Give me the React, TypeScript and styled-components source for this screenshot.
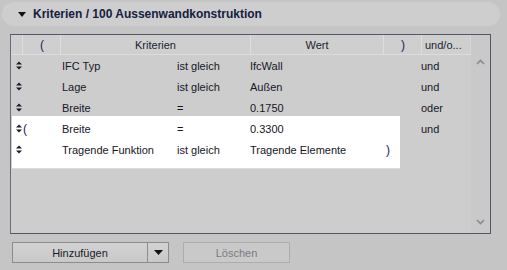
import React from "react";
import styled, { createGlobalStyle } from "styled-components";

const Global = createGlobalStyle`
  html, body { margin: 0; padding: 0; background: #c5c5c5; }
  body { font-family: "Liberation Sans", Arial, sans-serif; }
`;

const Page = styled.div`
  width: 507px;
  height: 270px;
  background: #c5c5c5;
  padding: 2px 7px 0 2px;
  box-sizing: border-box;
  display: flex;
  flex-direction: column;
`;

const TitleBar = styled.div`
  height: 24px;
  border-radius: 12px;
  background: #cecece;
  display: flex;
  align-items: center;
  padding-left: 16px;
  gap: 7px;
  font-weight: bold;
  font-size: 12px;
  color: #142040;
`;

const Body = styled.div`
  padding: 8px 0 0 8px;
  display: flex;
  flex-direction: column;
`;

const Table = styled.div`
  width: 481px;
  height: 200px;
  box-sizing: border-box;
  border: 1px solid #555566;
  border-left-color: #6a6a78;
  display: flex;
  background: #cdcdcd;
`;

const Main = styled.div`
  flex: 1;
  display: flex;
  flex-direction: column;
`;

const HeadRow = styled.div`
  display: flex;
  height: 19px;
  border-bottom: 1px solid #dcdcdc;
  background: #cfcfcf;
`;

const HeadCell = styled.div<{ w: number; align?: string }>`
  width: ${(p) => p.w}px;
  box-sizing: border-box;
  border-right: 1px solid #dedede;
  display: flex;
  align-items: center;
  justify-content: ${(p) => p.align || "center"};
  padding-left: ${(p) => (p.align ? "3px" : "0")};
  font-size: 11px;
  color: #1a1e30;
  white-space: nowrap;
  &:last-child { border-right: 1px solid #d6d6d6; }
`;

const Rows = styled.div`
  display: flex;
  flex-direction: column;
`;

const Row = styled.div`
  display: flex;
  height: 21px;
  align-items: center;
  font-size: 11px;
  color: #161626;
  white-space: nowrap;
`;

const Cell = styled.div<{ w: number }>`
  width: ${(p) => p.w}px;
  flex: none;
  display: flex;
  align-items: center;
`;

const IconCell = styled(Cell)`
  padding-left: 5px;
`;

const Group = styled.div`
  width: 388px;
  margin: -2px 0 0 1px;
  padding: 2px 0 8px 0;
  background: #ffffff;
  box-shadow: 0 1px 0 #dcdcdc;
  & > div { margin-left: -1px; }
`;

const Paren = styled.span`
  color: #14205a;
  font-size: 12px;
  margin-left: 1px;
`;

const Scrollbar = styled.div`
  width: 19px;
  background: #c9c9c9;
  display: flex;
  flex-direction: column;
  align-items: center;
  justify-content: space-between;
  padding: 24px 0 8px;
  box-sizing: border-box;
`;

const Buttons = styled.div`
  display: flex;
  gap: 14px;
  margin-top: 8px;
  margin-left: 2px;
`;

const SplitButton = styled.div`
  width: 157px;
  height: 21px;
  box-sizing: border-box;
  border: 1px solid #8c8c8c;
  background: linear-gradient(#d2d2d2, #c9c9c9);
  display: flex;
  font-size: 11px;
  color: #1a1a2a;
`;

const MainPart = styled.div`
  flex: 1;
  display: flex;
  align-items: center;
  justify-content: center;
  border-right: 1px solid #8c8c8c;
`;

const ArrowPart = styled.div`
  width: 20px;
  display: flex;
  align-items: center;
  justify-content: center;
`;

const Button = styled.div<{ disabled?: boolean }>`
  width: 107px;
  height: 21px;
  box-sizing: border-box;
  border: 1px solid ${(p) => (p.disabled ? "#adadad" : "#8c8c8c")};
  background: #c9c9c9;
  display: flex;
  align-items: center;
  justify-content: center;
  font-size: 11px;
  color: ${(p) => (p.disabled ? "#7a7a86" : "#1a1a2a")};
`;

const SortIcon = () => (
  <svg width="6" height="9" viewBox="0 0 6 9">
    <path d="M0 3.5 L3 0.5 L6 3.5 Z M0 5.5 L3 8.5 L6 5.5 Z" fill="#1a1a2a" />
  </svg>
);

const DownTri = ({ w, h }: { w: number; h: number }) => (
  <svg width={w} height={h} viewBox={`0 0 ${w} ${h}`}>
    <path d={`M0 0 L${w} 0 L${w / 2} ${h} Z`} fill="#111" />
  </svg>
);

const Chevron = ({ up }: { up?: boolean }) => (
  <svg width="9" height="6" viewBox="0 0 9 6">
    <path
      d={up ? "M1 5 L4.5 1.5 L8 5" : "M1 1 L4.5 4.5 L8 1"}
      fill="none"
      stroke="#8a8a8a"
      strokeWidth="1.6"
    />
  </svg>
);

const cols = [12, 38, 190, 133, 38, 49];

type R = { open?: string; krit: string; op: string; wert: string; close?: string; link: string };

const rowsTop: R[] = [
  { krit: "IFC Typ", op: "ist gleich", wert: "IfcWall", link: "und" },
  { krit: "Lage", op: "ist gleich", wert: "Außen", link: "und" },
  { krit: "Breite", op: "=", wert: "0.1750", link: "oder" },
];
const rowsGroup: R[] = [
  { open: "(", krit: "Breite", op: "=", wert: "0.3300", link: "und" },
  { krit: "Tragende Funktion", op: "ist gleich", wert: "Tragende Elemente", close: ")", link: "" },
];

const DataRow = ({ r }: { r: R }) => (
  <Row>
    <IconCell w={6}>
      <SortIcon />
    </IconCell>
    <Cell w={40}>{r.open ? <Paren>{r.open}</Paren> : null}</Cell>
    <Cell w={115}>{r.krit}</Cell>
    <Cell w={73}>{r.op}</Cell>
    <Cell w={135}>{r.wert}</Cell>
    <Cell w={36}>{r.close ? <Paren>{r.close}</Paren> : null}</Cell>
    <Cell w={49}>{r.link}</Cell>
  </Row>
);

export default function App() {
  return (
    <Page>
      <Global />
      <TitleBar>
        <DownTri w={8} h={5} />
        <span>Kriterien / 100 Aussenwandkonstruktion</span>
      </TitleBar>
      <Body>
        <Table>
          <Main>
            <HeadRow>
              <HeadCell w={cols[0]} />
              <HeadCell w={cols[1]}>
                <Paren>(</Paren>
              </HeadCell>
              <HeadCell w={cols[2]}>Kriterien</HeadCell>
              <HeadCell w={cols[3]}>Wert</HeadCell>
              <HeadCell w={cols[4]}>
                <Paren>)</Paren>
              </HeadCell>
              <HeadCell w={cols[5]} align="flex-start">
                und/o...
              </HeadCell>
            </HeadRow>
            <Rows>
              {rowsTop.map((r, i) => (
                <DataRow key={i} r={r} />
              ))}
              <Group>
                {rowsGroup.map((r, i) => (
                  <DataRow key={i} r={r} />
                ))}
              </Group>
            </Rows>
          </Main>
          <Scrollbar>
            <Chevron up />
            <Chevron />
          </Scrollbar>
        </Table>
        <Buttons>
          <SplitButton>
            <MainPart>Hinzufügen</MainPart>
            <ArrowPart>
              <DownTri w={9} h={5} />
            </ArrowPart>
          </SplitButton>
          <Button disabled>Löschen</Button>
        </Buttons>
      </Body>
    </Page>
  );
}
